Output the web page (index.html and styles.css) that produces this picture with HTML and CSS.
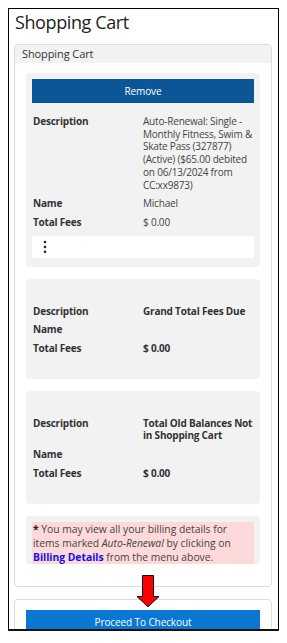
FILE: index.html
```html
<!DOCTYPE html>
<html>
<head>
<meta charset="utf-8">
<link rel="stylesheet" href="styles.css">
</head>
<body>
<div class="frame">
  <h1 class="title">Shopping Cart</h1>
  <div class="panel">
    <div class="panel-head">Shopping Cart</div>
    <div class="panel-body">
      <div class="card">
        <button class="btn btn-remove">Remove</button>
        <div class="rows rows-first">
          <div class="lbl">Description</div>
          <div class="val">Auto-Renewal: Single - Monthly Fitness, Swim &amp; Skate Pass (327877) (Active) ($65.00 debited on 06/13/2024 from CC:xx9873)</div>
          <div class="lbl">Name</div>
          <div class="val">Michael</div>
          <div class="lbl">Total Fees</div>
          <div class="val">$ 0.00</div>
        </div>
        <div class="kebab-box">
          <svg class="kebab" width="4" height="14" viewBox="0 0 4 14"><circle cx="2" cy="2" r="1.3" fill="#222"/><circle cx="2" cy="7" r="1.3" fill="#222"/><circle cx="2" cy="11.7" r="1.3" fill="#222"/></svg>
        </div>
      </div>
      <div class="card">
        <div class="rows rows-plain">
          <div class="lbl">Description</div>
          <div class="val strong">Grand Total Fees Due</div>
          <div class="lbl">Name</div>
          <div class="val"></div>
          <div class="lbl">Total Fees</div>
          <div class="val strong">$ 0.00</div>
        </div>
      </div>
      <div class="card">
        <div class="rows rows-plain">
          <div class="lbl">Description</div>
          <div class="val strong">Total Old Balances Not in Shopping Cart</div>
          <div class="lbl">Name</div>
          <div class="val"></div>
          <div class="lbl">Total Fees</div>
          <div class="val strong">$ 0.00</div>
        </div>
      </div>
      <div class="card card-note">
        <div class="note">
          <div class="note-line"><b>*</b> You may view all your billing details for</div>
          <div class="note-line">items marked <i>Auto-Renewal</i> by clicking on</div>
          <div class="note-line"><a class="link" href="#">Billing Details</a> from the menu above.</div>
        </div>
      </div>
    </div>
  </div>
  <div class="panel panel-second">
    <div class="panel-body2">
      <button class="btn btn-checkout">Proceed To Checkout</button>
    </div>
  </div>
  <svg class="arrow" width="24" height="33" viewBox="0 0 24 33"><polygon points="6.5,0.5 17.5,0.5 17.5,21.5 23,21.5 12,31.8 1,21.5 6.5,21.5" fill="#f00" stroke="#000" stroke-width="1"/></svg>
</div>
</body>
</html>
```
FILE: styles.css
```css
html, body {
  margin: 0;
  padding: 0;
  background: #fff;
}
body {
  margin: 8px;
  font-family: "Open Sans", "DejaVu Sans", sans-serif;
  color: #333;
}
.frame {
  position: relative;
  box-sizing: border-box;
  width: 271px;
  height: 623px;
  border: 1px solid #000;
  border-bottom: 2px solid #111;
  overflow: hidden;
  background: #fff;
}
.title {
  margin: 1px 0 10px 6px;
  font-size: 18px;
  line-height: 24px;
  letter-spacing: -0.4px;
  font-weight: 400;
  color: #222;
}
.panel {
  margin: 0 6px 0 5px;
  border: 1px solid #ddd;
  border-radius: 4px;
  background: #fff;
}
.panel-head {
  height: 18px;
  line-height: 17px;
  padding-left: 7px;
  font-size: 11px;
  letter-spacing: -0.1px;
  color: #333;
  background: #f2f2f2;
  border-radius: 3px 3px 0 0;
}
.panel-body {
  padding: 10px 11px 22px;
  display: flex;
  flex-direction: column;
  gap: 12px;
}
.card {
  background: #f2f2f2;
  border-radius: 4px;
  padding: 6px;
}
.btn {
  display: block;
  width: 100%;
  height: 24px;
  border: 0;
  margin: 0;
  color: #fff;
  font-family: "Open Sans", "DejaVu Sans", sans-serif;
  font-size: 10px;
  letter-spacing: -0.1px;
  padding: 0;
}
.btn-remove {
  background: #0a5696;
}
.rows {
  display: grid;
  grid-template-columns: 110px 1fr;
  padding-left: 1px;
  font-size: 10px;
  line-height: 12.7px;
  letter-spacing: -0.2px;
}
.rows > div {
  padding: 3px 0;
}
.rows-first {
  margin-top: 9px;
}
.rows-plain {
  margin: 17px 0 15px;
}
.lbl {
  font-weight: 700;
  color: #333;
}
.val {
  color: #444;
}
.val.strong {
  font-weight: 700;
  color: #333;
}
.kebab-box {
  margin: 4px 0 3px;
  height: 22px;
  background: #fff;
  border-radius: 2px;
  display: flex;
  align-items: center;
  padding-left: 11px;
}
.card-note {
  padding: 6px 6px 0;
}
.note {
  background: #fdd9d9;
  padding-left: 1px;
  font-size: 10.3px;
  line-height: 14.1px;
  color: #444;
}
.note-line {
  white-space: nowrap;
}
.note b {
  color: #222;
}
.link {
  color: #1010ee;
  font-weight: 700;
  text-decoration: none;
}
.panel-second {
  margin-top: 12px;
}
.panel-body2 {
  padding: 10px 11px;
}
.btn-checkout {
  background: #0a78d2;
}
.arrow {
  position: absolute;
  left: 127px;
  top: 566px;
}
```
